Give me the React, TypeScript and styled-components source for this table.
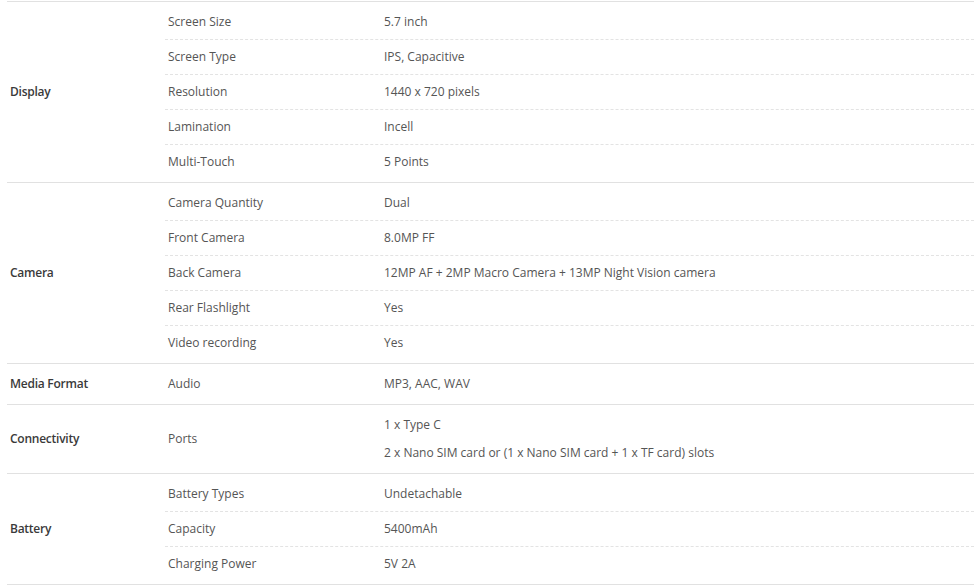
import React from "react";
import styled, { createGlobalStyle } from "styled-components";

type Spec = { name: string; values: string[] };
type Group = { title: string; specs: Spec[] };

const groups: Group[] = [
  {
    title: "Display",
    specs: [
      { name: "Screen Size", values: ["5.7 inch"] },
      { name: "Screen Type", values: ["IPS, Capacitive"] },
      { name: "Resolution", values: ["1440 x 720 pixels"] },
      { name: "Lamination", values: ["Incell"] },
      { name: "Multi-Touch", values: ["5 Points"] },
    ],
  },
  {
    title: "Camera",
    specs: [
      { name: "Camera Quantity", values: ["Dual"] },
      { name: "Front Camera", values: ["8.0MP FF"] },
      { name: "Back Camera", values: ["12MP AF + 2MP Macro Camera + 13MP Night Vision camera"] },
      { name: "Rear Flashlight", values: ["Yes"] },
      { name: "Video recording", values: ["Yes"] },
    ],
  },
  {
    title: "Media Format",
    specs: [{ name: "Audio", values: ["MP3, AAC, WAV"] }],
  },
  {
    title: "Connectivity",
    specs: [
      {
        name: "Ports",
        values: ["1 x Type C", "2 x Nano SIM card or (1 x Nano SIM card + 1 x TF card) slots"],
      },
    ],
  },
  {
    title: "Battery",
    specs: [
      { name: "Battery Types", values: ["Undetachable"] },
      { name: "Capacity", values: ["5400mAh"] },
      { name: "Charging Power", values: ["5V 2A"] },
    ],
  },
];

const GlobalStyle = createGlobalStyle`
  body {
    margin: 0;
    background: #fff;
    font-family: "Open Sans", "Liberation Sans", sans-serif;
    font-size: 12px;
    color: #555;
  }
`;

const SpecTable = styled.div`
  margin: 1px 0 0 7px;
  border-bottom: 1px solid #e1e1e1;
`;

const Section = styled.div`
  display: grid;
  grid-template-columns: 158px 1fr;
  border-top: 1px solid #e1e1e1;
`;

const GroupTitle = styled.div`
  display: flex;
  align-items: center;
  padding: 0 0 2px 3px;
  font-weight: 600;
  letter-spacing: -0.25px;
  color: #3a3a3a;
`;

const SpecList = styled.div`
  padding: 3px 0;
`;

const SpecRow = styled.div`
  display: grid;
  grid-template-columns: 216px 1fr;
  align-items: center;
  & + & {
    border-top: 1px dashed #e3e3e3;
  }
`;

const SpecName = styled.div`
  padding-left: 3px;
  line-height: 18px;
`;

const SpecValues = styled.div`
  display: flex;
  flex-direction: column;
  gap: 10px;
  padding: 8px 0 8px 3px;
  line-height: 18px;
`;

export default function App() {
  return (
    <>
      <GlobalStyle />
      <SpecTable>
        {groups.map((group) => (
          <Section key={group.title}>
            <GroupTitle>{group.title}</GroupTitle>
            <SpecList>
              {group.specs.map((spec) => (
                <SpecRow key={spec.name}>
                  <SpecName>{spec.name}</SpecName>
                  <SpecValues>
                    {spec.values.map((v) => (
                      <span key={v}>{v}</span>
                    ))}
                  </SpecValues>
                </SpecRow>
              ))}
            </SpecList>
          </Section>
        ))}
      </SpecTable>
    </>
  );
}
